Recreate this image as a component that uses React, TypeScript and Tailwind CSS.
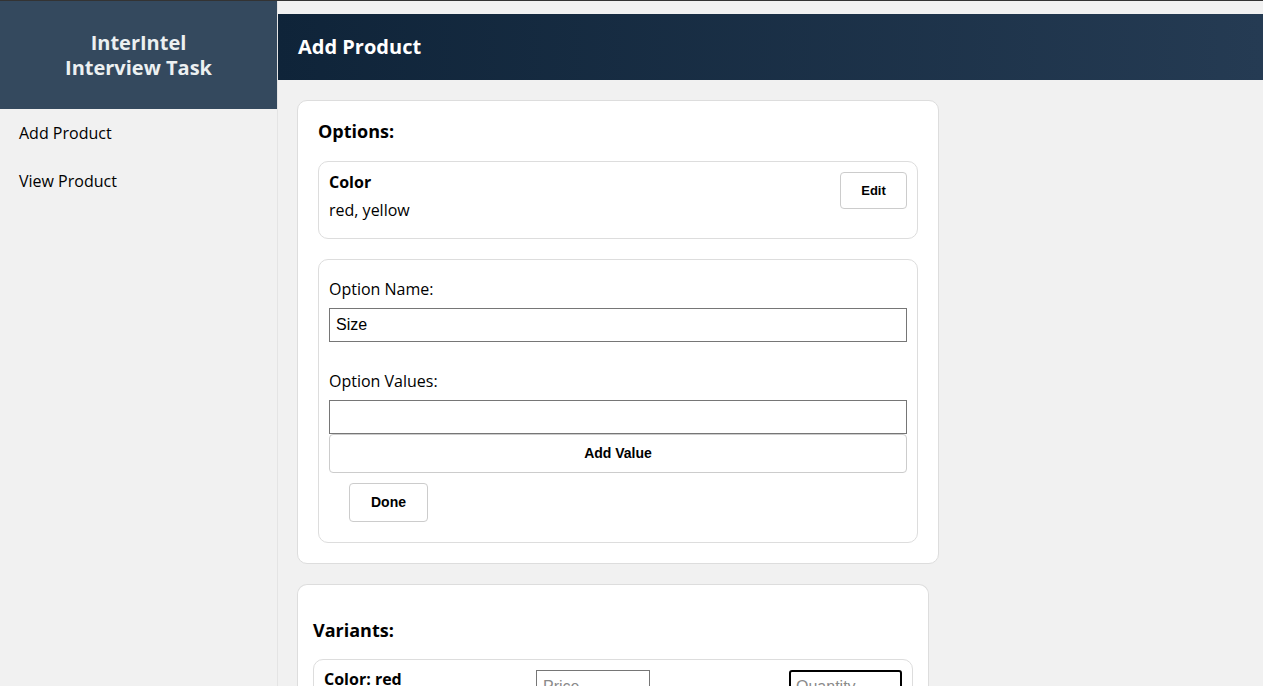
import React, { useState } from 'react';

const sans = "font-['Open_Sans','Noto_Sans',sans-serif]";
const arial = "font-['Liberation_Sans',Arial,sans-serif]";

function OptionSummary({ name, values }: { name: string; values: string[] }) {
  return (
    <div className="flex items-start justify-between rounded-[10px] border border-[#dddddd] px-[10px] pt-[10px] pb-[18px]">
      <div className="pt-[1px]">
        <div className="text-[16px] font-bold leading-[19px]">{name}</div>
        <div className="text-[16px] leading-[19px] mt-[9px]">{values.join(', ')}</div>
      </div>
      <button className={`${arial} h-[37px] w-[67px] rounded-[4px] border border-[#cccccc] bg-white text-[13px] font-bold`}>
        Edit
      </button>
    </div>
  );
}

export default function App() {
  const [optionName, setOptionName] = useState('Size');
  const [optionValue, setOptionValue] = useState('');

  return (
    <div className={`${sans} min-h-screen border-t border-[#333333] bg-[#f1f1f1] text-black`}>
      <div className="flex">
        {/* Sidebar */}
        <aside className="w-[278px] shrink-0 min-h-[685px] border-r border-[#e4e4e4] bg-[#f1f1f1]">
          <div className="flex h-[108px] flex-col items-center justify-center bg-[#34495e] text-[20px] font-bold leading-[25px] text-[#ecf0f1]">
            <span>InterIntel</span>
            <span>Interview Task</span>
          </div>
          <nav className="flex flex-col gap-[29px] px-[19px] pt-[15px] text-[16px] font-medium leading-[19px]">
            <a href="#">Add Product</a>
            <a href="#">View Product</a>
          </nav>
        </aside>

        {/* Main */}
        <main className="flex-1 pt-[13px]">
          <header className="flex h-[66px] items-center bg-gradient-to-r from-[#0f2439] to-[#253b53] px-[20px] text-[20px] font-bold text-white">
            Add Product
          </header>

          <div className="px-[19px] pt-[20px]">
            {/* Options card */}
            <section className="w-[642px] rounded-[10px] border border-[#dddddd] bg-white px-[20px] pt-[19px] pb-[20px]">
              <h2 className="text-[18px] font-bold leading-[22px]">Options:</h2>
              <div className="mt-[19px]">
                <OptionSummary name="Color" values={['red', 'yellow']} />
              </div>

              <div className="mt-[20px] rounded-[10px] border border-[#dddddd] px-[10px] pt-[20px] pb-[20px]">
                <label className="block text-[16px] leading-[19px]">Option Name:</label>
                <input
                  value={optionName}
                  onChange={(e) => setOptionName(e.target.value)}
                  className={`${arial} mt-[9px] block h-[34px] w-full border border-[#767676] px-[6px] text-[16px] outline-none`}
                />
                <label className="mt-[30px] block text-[16px] leading-[19px]">Option Values:</label>
                <input
                  value={optionValue}
                  onChange={(e) => setOptionValue(e.target.value)}
                  className={`${arial} mt-[9px] block h-[34px] w-full border border-[#767676] px-[6px] text-[16px] outline-none`}
                />
                <button className={`${arial} block h-[39px] w-full rounded-[4px] border border-[#cccccc] bg-white text-[14px] font-bold`}>
                  Add Value
                </button>
                <button className={`${arial} ml-[20px] mt-[10px] block h-[39px] w-[79px] rounded-[4px] border border-[#cccccc] bg-white text-[14px] font-bold`}>
                  Done
                </button>
              </div>
            </section>

            {/* Variants card */}
            <section className="mt-[20px] w-[632px] rounded-t-[10px] border border-b-0 border-[#dddddd] bg-white px-[15px] pt-[34px] pb-[20px]">
              <h2 className="text-[18px] font-bold leading-[22px]">Variants:</h2>
              <div className="mt-[18px] flex items-start rounded-[10px] border border-[#dddddd] px-[10px] pt-[10px] pb-[20px]">
                <div className="w-[212px] text-[16px] font-bold leading-[19px]">Color: red</div>
                <input
                  placeholder="Price"
                  className={`${arial} h-[34px] w-[114px] border border-[#767676] px-[6px] text-[16px] placeholder:text-[#8a8a8a] outline-none`}
                />
                <div className="flex-1" />
                <input
                  type="number"
                  placeholder="Quantity"
                  className={`${arial} h-[34px] w-[113px] rounded-[3px] border-2 border-black px-[5px] text-[16px] placeholder:text-[#8a8a8a] outline-none`}
                />
              </div>
            </section>
          </div>
        </main>
      </div>
    </div>
  );
}
